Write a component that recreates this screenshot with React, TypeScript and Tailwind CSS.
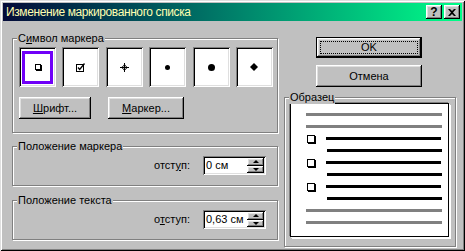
import type { ReactNode } from "react"

const raised =
	"shadow-[inset_-1px_-1px_0_#000,inset_1px_1px_0_#fff,inset_-2px_-2px_0_#808080,inset_2px_2px_0_#dfdfdf]"
const sunken =
	"shadow-[inset_1px_1px_0_#808080,inset_-1px_-1px_0_#fff,inset_2px_2px_0_#000,inset_-2px_-2px_0_#dfdfdf]"

function Group({ label, className, children }: { label: ReactNode; className: string; children?: ReactNode }) {
	return (
		<div className={`relative border border-[#808080] shadow-[inset_1px_1px_0_#fff,1px_1px_0_#fff] ${className}`}>
			<span className="absolute -top-[7px] left-[4px] bg-[#c0c0c0] px-[1px] leading-[13px]">{label}</span>
			{children}
		</div>
	)
}

function ShadowSquare({ size }: { size: string }) {
	return <div className={`${size} border border-black bg-white shadow-[1px_1px_0_#000]`} />
}

function MarkerBox({ selected, children }: { selected?: boolean; children: ReactNode }) {
	return (
		<div className={`flex h-[40px] w-[37px] shrink-0 items-center justify-center bg-white ${sunken}`}>
			{selected ? (
				<div className="flex h-[33px] w-[31px] items-center justify-center border-[3px] border-[#7000f8]">
					{children}
				</div>
			) : (
				children
			)}
		</div>
	)
}

function Spin({ up }: { up?: boolean }) {
	return (
		<div className={`flex flex-1 items-center justify-center bg-[#c0c0c0] ${raised}`}>
			<div
				className={`h-0 w-0 border-x-[3px] border-x-transparent ${up ? "border-b-[3px] border-b-black" : "border-t-[3px] border-t-black"}`}
			/>
		</div>
	)
}

function Indent({ value, label }: { value: string; label: ReactNode }) {
	return (
		<div className="mt-[9px] flex items-center justify-end pr-[11px]">
			<span className="mr-[13px]">{label}</span>
			<div className={`flex h-[19px] w-[63px] bg-white p-[2px] ${sunken}`}>
				<span className="flex-1 pl-[1px] leading-[15px]">{value}</span>
				<div className="flex w-[17px] flex-col">
					<Spin up />
					<Spin />
				</div>
			</div>
		</div>
	)
}

function Button({ children, className }: { children: ReactNode; className: string }) {
	return <div className={`flex items-center justify-center bg-[#c0c0c0] ${raised} ${className}`}>{children}</div>
}

export default function App() {
	return (
		<div
			className="h-[251px] w-[465px] overflow-hidden bg-[#c0c0c0] p-[3px] text-[11px] text-black shadow-[inset_1px_1px_0_#dfdfdf,inset_-1px_-1px_0_#000,inset_2px_2px_0_#fff,inset_-2px_-2px_0_#808080]"
			style={{ fontFamily: '"Liberation Sans", Arial, sans-serif' }}
		>
			{/* Title bar */}
			<div className="flex h-[18px] items-center justify-between bg-gradient-to-r from-[#040a38] via-[#00806a] to-[#00ff88] pl-[3px] pr-[2px]">
				<span className="text-[12px] leading-[16px] tracking-[-0.4px] text-[#ffffb0]">Изменение маркированного списка</span>
				<div className="flex gap-[2px]">
					<div className={`flex h-[14px] w-[16px] items-center justify-center bg-[#c0c0c0] text-[12px] font-bold leading-none ${raised}`}>
						?
					</div>
					<div className={`flex h-[14px] w-[16px] items-center justify-center bg-[#c0c0c0] ${raised}`}>
						<svg width="8" height="7" viewBox="0 0 8 7">
							<path d="M0 0h2l2 2 2-2h2L5 3.5 8 7H6L4 5 2 7H0l3-3.5z" fill="#000" />
						</svg>
					</div>
				</div>
			</div>

			{/* Body */}
			<div className="flex pl-[9px]">
				{/* Left column */}
				<div className="flex w-[266px] flex-col">
					<Group
						className="mt-[17px] h-[95px]"
						label={
							<>
								С<u>и</u>мвол маркера
							</>
						}
					>
						<div className="ml-[6px] mt-[8px] flex gap-[6.4px]">
							<MarkerBox selected>
								<ShadowSquare size="h-[6px] w-[6px]" />
							</MarkerBox>
							<MarkerBox>
								<svg width="10" height="9" viewBox="0 0 10 9">
									<rect x="0.5" y="1.5" width="7" height="7" fill="none" stroke="#000" />
									<path d="M2 4.5l1.7 2L8.5 0.5" fill="none" stroke="#000" strokeWidth="1.3" />
								</svg>
							</MarkerBox>
							<MarkerBox>
								<svg width="9" height="9" viewBox="0 0 9 9">
									<path d="M4.5 0v9M0 4.5h9" stroke="#000" strokeWidth="1" />
									<path d="M4.5 1.8L7.2 4.5 4.5 7.2 1.8 4.5z" fill="none" stroke="#000" strokeWidth="1" />
								</svg>
							</MarkerBox>
							<MarkerBox>
								<div className="h-[5px] w-[5px] rounded-full bg-black" />
							</MarkerBox>
							<MarkerBox>
								<div className="h-[7px] w-[7px] rounded-full bg-black" />
							</MarkerBox>
							<MarkerBox>
								<svg width="8" height="8" viewBox="0 0 8 8">
									<path d="M4 0L8 4 4 8 0 4z" fill="#000" />
								</svg>
							</MarkerBox>
						</div>
						<div className="ml-[6px] mt-[10px] flex gap-[17px]">
							<Button className="h-[22px] w-[72px]">
								<span>
									<u>Ш</u>рифт...
								</span>
							</Button>
							<Button className="h-[22px] w-[76px]">
								<span>
									<u>М</u>аркер...
								</span>
							</Button>
						</div>
					</Group>

					<Group className="mt-[13px] h-[40px]" label="Положение маркера">
						<Indent
							value="0 см"
							label={
								<>
									отст<u>у</u>п:
								</>
							}
						/>
					</Group>

					<Group className="mt-[14px] h-[40px]" label="Положение текста">
						<Indent
							value="0,63 см"
							label={
								<>
									о<u>т</u>ступ:
								</>
							}
						/>
					</Group>
				</div>

				{/* Right column */}
				<div className="ml-[6px] flex w-[172px] flex-col">
					<div className="ml-[32px] mt-[16px] h-[21px] w-[106px] border border-black">
						<div className={`flex h-full w-full items-center justify-center bg-[#c0c0c0] p-[3px] ${raised}`}>
							<div className="flex h-full w-full items-center justify-center border border-dotted border-black">
								OK
							</div>
						</div>
					</div>
					<Button className="ml-[32px] mt-[7px] h-[22px] w-[106px]">Отмена</Button>

					<Group className="mt-[10px] h-[150px]" label="Образец">
						<div className="ml-[5px] mt-[5px] h-[134px] w-[159px] border border-black bg-white pt-[9px] shadow-[-1px_-1px_0_#808080,1px_1px_0_#fff,2px_2px_0_#fff]">
							<div className="flex flex-col gap-[9px]">
								<div className="ml-[15px] h-[3px] w-[136px] bg-[#808080]" />
								<div className="ml-[15px] h-[3px] w-[136px] bg-[#808080]" />
								{[0, 1, 2].map((i) => (
									<div key={i} className="flex flex-col gap-[9px]">
										<div className="flex h-[3px] items-center">
											<div className="ml-[16px] shrink-0">
												<ShadowSquare size="h-[8px] w-[8px]" />
											</div>
											<div className="ml-[11px] h-[3px] w-[115px] shrink-0 bg-black" />
										</div>
										<div className="ml-[36px] h-[3px] w-[115px] bg-black" />
									</div>
								))}
								<div className="ml-[15px] h-[3px] w-[136px] bg-[#808080]" />
								<div className="ml-[15px] h-[3px] w-[136px] bg-[#808080]" />
							</div>
						</div>
					</Group>
				</div>
			</div>
		</div>
	)
}
